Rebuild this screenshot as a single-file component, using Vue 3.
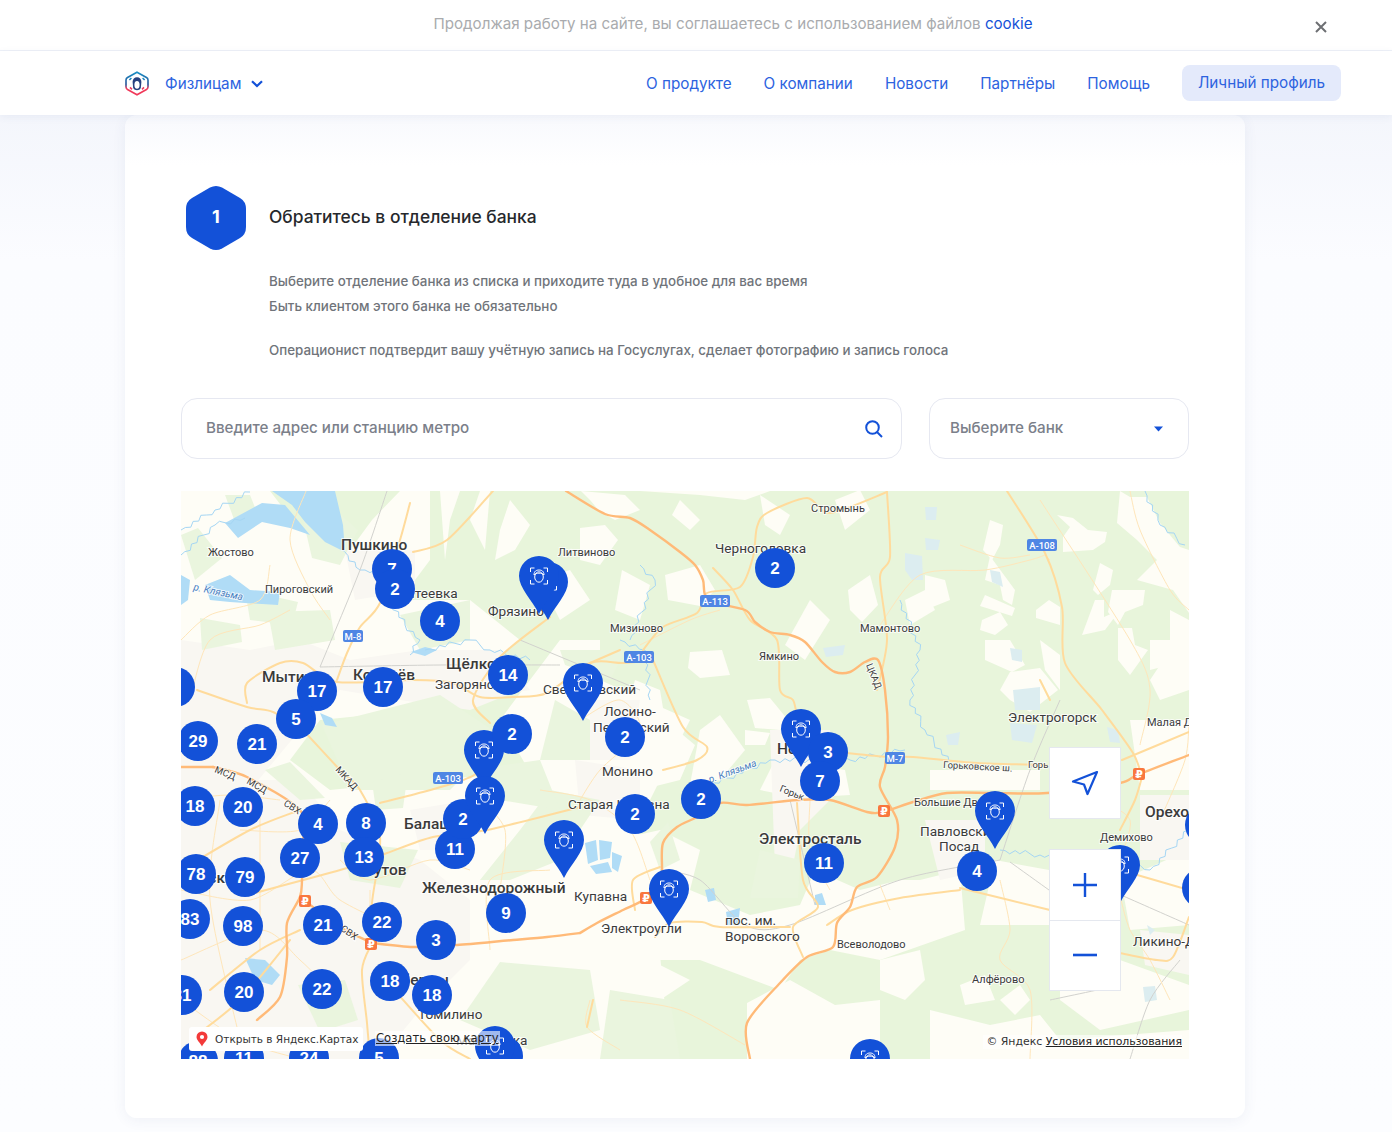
<script setup>
const toPts = (s) => {
  const n = s.trim().split(/[\s,]+/).map(Number)
  const out = []
  for (let i = 0; i < n.length; i += 2) out.push([n[i], n[i + 1]])
  return out
}
const smooth = (s) => {
  const p = toPts(s)
  let d = `M${p[0][0]} ${p[0][1]}`
  for (let i = 0; i < p.length - 1; i++) {
    const a = p[i - 1] || p[i]
    const b = p[i]
    const c = p[i + 1]
    const e = p[i + 2] || c
    const c1x = b[0] + (c[0] - a[0]) / 7
    const c1y = b[1] + (c[1] - a[1]) / 7
    const c2x = c[0] - (e[0] - b[0]) / 7
    const c2y = c[1] - (e[1] - b[1]) / 7
    d += `C${c1x.toFixed(1)} ${c1y.toFixed(1)} ${c2x.toFixed(1)} ${c2y.toFixed(1)} ${c[0]} ${c[1]}`
  }
  return d
}
const wiggle = (s) => {
  const p = toPts(s)
  let d = `M${p[0][0]} ${p[0][1]}`
  let k = 0
  for (let i = 0; i < p.length - 1; i++) {
    const dx = p[i + 1][0] - p[i][0]
    const dy = p[i + 1][1] - p[i][1]
    const len = Math.hypot(dx, dy)
    const n = Math.max(2, Math.round(len / 5))
    for (let j = 1; j <= n; j++) {
      k++
      const o = j === n ? 0 : ((k * 7) % 5 - 2) * 1.3
      const x = p[i][0] + (dx * j) / n - (dy / len) * o
      const y = p[i][1] + (dy * j) / n + (dx / len) * o
      d += `L${x.toFixed(1)} ${y.toFixed(1)}`
    }
  }
  return d
}
const cream = [
  "1057,515 1073,518 1088,530 1107,532 1105,542 1093,550 1063,552 1063,537 1070,527",
  "1120,491 1130,497 1147,497 1160,523 1180,547 1189,550 1189,613 1173,590 1137,580 1157,560 1137,540 1117,523",
  "1100,563 1113,570 1110,585 1098,595 1093,590",
  "1112,590 1145,590 1143,605 1125,612 1118,625 1108,612",
  "1095,600 1104,600 1104,617 1120,610 1105,630 1082,635",
  "1118,628 1132,628 1135,645 1148,650 1130,675 1118,660",
  "1049,600 1060,607 1060,625 1036,618 1036,610",
  "990,520 1003,525 1000,545 992,560 983,550",
  "990,556 1015,590 1012,605 1003,600 1000,585 985,580",
  "985,595 1015,608 1012,616 980,606",
  "982,620 1000,612 1008,625 995,635 980,630",
  "985,640 1010,640 1025,665 1012,672 985,660",
  "1010,672 1040,668 1058,690 1030,712 1010,700 1000,690",
  "1170,610 1189,620 1189,690 1160,700 1150,680 1170,650",
  "1040,640 1060,655 1060,690 1045,670",
  "581,491 625,495 640,510 615,520 600,512 590,500",
  "640,491 700,495 745,500 770,491",
  "580,528 605,525 618,540 600,565 580,560",
  "665,575 700,565 715,590 700,606 668,600",
  "622,570 650,585 640,620 615,610",
  "680,500 700,520 690,530 672,515",
  "760,495 790,515 780,535 765,525",
  "835,500 860,490 870,510 845,530",
  "905,600 925,590 935,610 910,625",
  "925,575 945,580 950,600 925,610",
  "848,590 870,575 878,605 862,622 850,610",
  "747,700 770,698 788,720 780,730 755,728",
  "745,730 770,733 765,745 745,745",
  "690,652 722,650 730,675 700,678 688,668",
  "635,680 660,690 665,720 695,745 680,780 640,790 612,775 625,720",
  "700,730 720,715 745,750 720,780 690,785",
  "775,760 845,770 850,795 800,798 760,790",
  "810,600 830,620 805,660 785,645",
  "930,770 1040,770 1040,790 930,790",
  "615,840 660,830 700,850 690,890 750,915 800,905 815,870 860,890 900,880 920,880 960,870 965,930 880,960 830,950 800,960 780,990 700,960 640,960 600,960",
  "747,1003 790,980 835,1005 880,1000 880,1059 747,1059",
  "581,945 640,955 690,980 660,1000 600,990 581,985",
  "930,1010 990,1025 1040,1015 1060,1040 1189,1030 1189,1059 930,1059",
  "1060,960 1120,960 1189,985 1189,1010 1100,1030 1060,1000",
  "880,960 920,950 925,980 905,1000 880,990",
  "1000,1000 1020,985 1030,1000 1015,1015",
  "960,985 985,975 995,1000 965,1005",
  "1121,880 1189,850 1189,925 1130,930",
  "995,860 1049,870 1049,925 980,925",
  "181,491 270,491 300,530 350,550 372,520 400,491 430,491 430,560 400,600 470,600 520,640 470,680 420,710 320,720 290,760 330,790 430,780 560,770 620,800 650,850 670,1059 181,1059",
  "440,491 460,491 450,520 445,560",
  "510,500 530,525 515,550 495,560 500,530",
  "470,520 480,491 490,491 485,550",
  "560,640 600,640 600,680 690,720 650,800 540,790 500,720",
  "540,580 570,570 590,600 560,620",
  "1130,720 1189,720 1189,790 1140,790",
  "1150,640 1189,640 1189,660 1150,670"
]
const urban = [
  "181,640 250,650 300,640 350,660 420,650 470,660 520,690 470,710 400,700 340,690 300,730 250,790 181,780",
  "181,780 300,780 340,830 420,860 470,900 470,960 420,1010 380,1059 181,1059",
  "345,550 415,550 415,590 355,600",
  "430,650 500,650 530,690 470,700",
  "590,700 640,700 630,760 590,760",
  "575,760 640,770 640,820 580,815",
  "770,730 830,730 840,790 800,830 790,880 775,870",
  "925,820 985,820 985,870 940,880",
  "1140,795 1189,795 1189,860 1140,860",
  "410,810 470,800 470,850 420,850",
  "1140,930 1189,935 1189,975 1145,965"
]
const green = [
  "225,495 250,495 258,515 235,522",
  "181,535 198,528 222,558 195,580",
  "268,612 330,610 335,640 275,650",
  "302,515 330,505 358,530 340,565 312,558",
  "245,590 298,602 292,625 250,620",
  "200,618 240,625 242,642 202,650",
  "400,615 470,600 470,640 420,650",
  "560,650 625,650 610,680 565,665",
  "322,725 440,695 500,735 470,770 450,790 350,790",
  "265,770 290,762 325,798 300,800",
  "340,842 418,850 400,888 350,880",
  "372,782 408,772 403,808 376,810",
  "298,985 345,980 358,1020 320,1032",
  "480,880 520,830 550,790 600,800 560,860 510,880",
  "650,842 668,822 680,860 660,870",
  "500,962 590,970 600,1030 530,1050 460,1020",
  "610,990 670,1000 680,1059 600,1059",
  "760,850 800,860 798,898 750,898",
  "555,700 590,720 590,760 540,760",
  "470,770 540,760 560,810 500,800"
]
const water = [
  "272,491 335,491 343,525 345,552 325,542 305,522 292,505",
  "225,523 262,503 285,505 310,535 290,528 262,522 238,538",
  "181,575 190,580 188,600 181,605",
  "205,585 230,575 250,590 280,592 278,605 230,602 210,600",
  "585,843 596,840 598,860 588,864",
  "599,840 612,842 610,858 600,860",
  "590,866 608,862 612,872 596,874",
  "612,852 622,856 618,872 612,868",
  "245,958 265,960 280,975 272,985 255,980",
  "320,713 332,718 337,727 325,725",
  "411,652 425,647 437,650 425,656",
  "815,895 822,893 826,905 815,905",
  "705,890 714,888 716,900 708,902",
  "726,912 740,908 738,925 728,925",
  "1120,870 1132,868 1128,880"
]
const pale = [
  "905,553 922,556 923,580 912,580 905,570",
  "925,538 940,540 938,550 926,550",
  "925,507 937,507 936,520 926,520",
  "823,648 845,645 843,655 826,657",
  "990,570 1000,572 1003,587 992,582",
  "1010,648 1022,650 1022,662 1012,660",
  "1013,690 1040,687 1040,710 1015,710",
  "1010,723 1037,725 1032,743 1012,740",
  "1107,727 1118,730 1120,743 1110,742",
  "1143,987 1155,986 1157,1000 1145,1002",
  "946,735 960,732 958,745 948,745",
  "1147,925 1155,930 1150,935"
]
const rivers = [
  "181 530 215 510 250 492",
  "181 555 215 525 245 518",
  "345 552 360 570 375 570 390 600 405 625 420 640 410 655",
  "425 650 470 640 490 650 530 660",
  "620 640 645 650 650 700",
  "1145 491 1160 525 1185 545",
  "900 600 920 650 910 700 925 730 955 770",
  "700 790 770 760 850 760 905 750",
  "1000 850 1040 855 1065 860",
  "1125 862 1150 870 1189 830",
  "640 565 655 580 630 640"
].map(wiggle)
const roadsMinor = [
  "181 640 210 615 260 600 270 565",
  "190 700 210 640 260 625 290 610",
  "306 491 290 540 310 590 330 620",
  "640 645 690 620 720 610",
  "1040 500 1130 640 1150 690 1140 745",
  "880 625 920 575 985 570 1030 560 1045 555",
  "960 545 1000 558 1030 555",
  "1130 491 1140 530 1170 590 1189 610",
  "580 720 620 700 640 730 600 770 580 800",
  "810 800 810 850 830 890",
  "880 885 890 910",
  "1100 800 1130 820 1120 860",
  "1121 900 1130 930 1150 960 1170 1000",
  "1000 880 1010 930 1000 960 1030 990 1030 1059",
  "1050 560 1045 555",
  "1160 820 1185 760 1189 720",
  "550 870 490 880 490 950",
  "240 830 300 830 330 800",
  "181 890 250 900 310 870 340 900 400 930",
  "181 960 260 930 300 960 340 1000",
  "220 800 210 900 240 1040",
  "260 800 260 950",
  "370 890 370 940",
  "340 860 370 880 430 860 470 870",
  "500 890 505 830 480 800",
  "540 790 590 800 630 830 650 880",
  "180 800 230 795 280 800",
  "181 1000 240 1040 300 1059",
  "620 1000 680 1010 745 1045",
  "590 1000 587 1027 620 1050"
]
const roadsMain = [
  "410 503 400 540 380 603 360 627 347 653 337 680",
  "493 491 447 540 413 552",
  "550 617 500 657 473 700 490 723",
  "197 690 247 707 273 712 303 730",
  "247 703 247 683 280 663 303 663 337 682 413 680 453 683 480 697 513 697 547 693 590 663 623 663 653 660",
  "303 730 340 770 360 790 380 837 372 903 372 943",
  "380 803 423 792 463 780 480 770 497 740",
  "247 895 347 868 387 853 433 837 487 830 580 807",
  "372 943 362 970 367 1023 370 1059",
  "390 985 440 1040 470 1059",
  "190 1040 240 1000 290 940",
  "181 870 250 830 300 810",
  "210 990 260 950 300 930",
  "1007 491 1045 553 1062 607 1065 663 1102 710 1133 753 1142 777",
  "1122 760 1189 732",
  "960 888 1050 910",
  "1120 953 1157 960 1173 957 1189 917",
  "797 803 803 880 818 907 793 927 803 957",
  "790 927 720 927 702 922 670 923 655 937",
  "635 910 633 880 660 867",
  "827 925 852 910 900 898 960 890",
  "887 492 830 513 807 498 767 513 757 527 753 557 740 587 707 593 697 613 663 627 643 650",
  "713 568 733 590 750 620 777 640 780 690 793 700 797 717",
  "653 660 683 727 707 747 697 760 663 770",
  "887 492 890 557 880 577 887 640 877 690",
  "847 753 887 757 913 757 977 763 1047 765",
  "593 1000 587 1027",
  "1040 680 1050 700",
  "1120 830 1135 800 1142 777",
  "1120 870 1189 890",
  "620 650 590 663"
]
const roadsMajor = [
  "566 491 605 514 630 518 650 530 680 552 695 565 703 580 708 600 745 610 755 622 770 632 790 635 805 642 822 662 835 672 850 672 865 662 878 660 885 690 888 737 885 767 880 787 897 820 895 847 877 877 857 887 850 907 837 923 833 947 807 957 780 983 747 1023 750 1059",
  "580 933 597 923 623 910 643 900 662 880 662 867 663 843 677 827 697 817 720 803 747 805 797 800 830 800 867 812 883 812 913 802 947 793 993 793 1047 793 1120 783 1137 775 1189 755",
  "372 943 413 947 457 945 513 940 547 937 580 933",
  "213 767 247 777 300 810 303 843 302 880 300 897 287 923 287 957 280 997 257 1020",
  "300 897 340 927 372 943",
  "181 767 213 767"
]
const roads = {
  minor: roadsMinor.map(smooth),
  main: roadsMain.map(smooth),
  major: roadsMajor.map(smooth)
}
const rails = [
  "387 491 360 570 320 667",
  "320 667 440 665 560 665",
  "520 640 640 690",
  "660 870 700 880 745 925 790 925 900 880 1000 860",
  "1010 862 1049 890",
  "1121 895 1189 925",
  "815 905 790 800",
  "1060 700 1030 770 1000 860",
  "1050 1000 1121 985",
  "1130 1059 1150 1000 1180 960"
]
const railPaths = rails.map(smooth)
const labels = [
  { t: "Жостово", x: 208, y: 556, c: "s" },
  { t: "Пироговский", x: 265, y: 593, c: "s" },
  { t: "Пушкино", x: 341, y: 550, c: "b" },
  { t: "Ивантеевка", x: 382, y: 598, c: "m" },
  { t: "Фрязино", x: 488, y: 616, c: "m" },
  { t: "Литвиново", x: 558, y: 556, c: "s" },
  { t: "Стромынь", x: 811, y: 512, c: "s" },
  { t: "Черноголовка", x: 715, y: 553, c: "m" },
  { t: "Мизиново", x: 610, y: 632, c: "s" },
  { t: "Мамонтово", x: 860, y: 632, c: "s" },
  { t: "Ямкино", x: 759, y: 660, c: "s" },
  { t: "Щёлково", x: 446, y: 669, c: "b" },
  { t: "Загорянский", x: 435, y: 689, c: "m" },
  { t: "Свердловский", x: 543, y: 694, c: "m" },
  { t: "Лосино-", x: 604, y: 716, c: "m" },
  { t: "Петровский", x: 593, y: 732, c: "m" },
  { t: "Мытищи", x: 262, y: 682, c: "b" },
  { t: "Королёв", x: 353, y: 680, c: "b" },
  { t: "Монино", x: 602, y: 776, c: "m" },
  { t: "Ногинск", x: 777, y: 754, c: "b" },
  { t: "Электрогорск", x: 1008, y: 722, c: "m" },
  { t: "Малая Дубна", x: 1147, y: 726, c: "s" },
  { t: "Старая Купавна", x: 568, y: 809, c: "m" },
  { t: "Большие Дворы", x: 914, y: 806, c: "s" },
  { t: "Павловский", x: 920, y: 836, c: "m" },
  { t: "Посад", x: 939, y: 851, c: "m" },
  { t: "Орехово", x: 1145, y: 817, c: "b" },
  { t: "Демихово", x: 1100, y: 841, c: "s" },
  { t: "Электросталь", x: 759, y: 844, c: "b" },
  { t: "Балашиха", x: 404, y: 829, c: "b" },
  { t: "Реутов", x: 356, y: 875, c: "b" },
  { t: "Москва", x: 186, y: 883, c: "b" },
  { t: "Железнодорожный", x: 422, y: 893, c: "b" },
  { t: "Купавна", x: 574, y: 901, c: "m" },
  { t: "Электроугли", x: 601, y: 933, c: "m" },
  { t: "пос. им.", x: 725, y: 925, c: "m" },
  { t: "Воровского", x: 725, y: 941, c: "m" },
  { t: "Всеволодово", x: 837, y: 948, c: "s" },
  { t: "Алфёрово", x: 972, y: 983, c: "s" },
  { t: "Ликино-Дулёво", x: 1133, y: 946, c: "m" },
  { t: "Люберцы", x: 378, y: 985, c: "b" },
  { t: "Томилино", x: 418, y: 1019, c: "m" },
  { t: "Малаховка", x: 456, y: 1045, c: "m" },
  { t: "Долгопрудный", x: 72, y: 650, c: "b" }
]
const tilted = [
  { t: "р. Клязьма", x: 193, y: 590, r: 12, c: "river" },
  { t: "р. Клязьма", x: 710, y: 783, r: -20, c: "river" },
  { t: "МСД", x: 214, y: 772, r: 22, c: "tiny" },
  { t: "МСД", x: 246, y: 783, r: 30, c: "tiny" },
  { t: "СВХ", x: 283, y: 805, r: 32, c: "tiny" },
  { t: "МКАД", x: 335, y: 770, r: 48, c: "tiny" },
  { t: "СВХ", x: 340, y: 930, r: 35, c: "tiny" },
  { t: "ЦКАД", x: 866, y: 665, r: 68, c: "tiny" },
  { t: "Горьковское ш.", x: 943, y: 768, r: 3, c: "tiny" },
  { t: "Горь", x: 1028, y: 768, r: 0, c: "tiny" },
  { t: "Горьк", x: 779, y: 791, r: 22, c: "tiny" }
]
const shields = [
  { t: "М-8", x: 353, y: 636, w: 20 },
  { t: "А-103", x: 448, y: 778, w: 30 },
  { t: "А-113", x: 715, y: 601, w: 30 },
  { t: "А-103", x: 639, y: 657, w: 30 },
  { t: "А-108", x: 1042, y: 545, w: 30 },
  { t: "М-7", x: 895, y: 758, w: 20 }
]
const rubles = [
  [305, 901],
  [371, 944],
  [646, 898],
  [884, 811],
  [1139, 774]
]
const pins = [
  [548, 582],
  [539, 576],
  [583, 683],
  [484, 750],
  [564, 840],
  [669, 889],
  [801, 729],
  [995, 811],
  [1120, 865],
  [870, 1059],
  [503, 1056],
  [495, 1046]
]
const clusters = [
  [392, 569, "7"], [395, 589, "2"], [440, 621, "4"], [317, 691, "17"], [383, 687, "17"],
  [296, 719, "5"], [508, 675, "14"], [257, 744, "21"], [198, 741, "29"], [175, 687, ""],
  [195, 806, "18"], [243, 807, "20"], [318, 824, "4"], [366, 823, "8"], [455, 849, "11"],
  [463, 819, "2"], [300, 858, "27"], [364, 857, "13"], [196, 874, "78"], [245, 877, "79"],
  [190, 919, "83"], [243, 926, "98"], [323, 925, "21"], [382, 922, "22"], [436, 940, "3"],
  [506, 913, "9"], [390, 981, "18"], [432, 995, "18"], [322, 989, "22"], [244, 992, "20"],
  [182, 995, "81"], [198, 1061, "88"], [244, 1058, "11"], [309, 1058, "24"], [379, 1058, "5"],
  [775, 568, "2"], [625, 737, "2"], [635, 814, "2"], [701, 799, "2"], [828, 752, "3"],
  [820, 781, "7"], [824, 863, "11"], [977, 871, "4"], [1205, 825, ""], [1202, 888, ""]
]
const pinsTop = [[485, 796]]
const clusterTop = [[512, 734, "2"]]
</script>

<template>
  <div class="page">
    <div class="cookie">
      <p class="cookie-text">Продолжая работу на сайте, вы соглашаетесь с использованием файлов <a class="cookie-link">cookie</a></p>
      <svg class="cookie-close" width="12" height="12" viewBox="0 0 12 12"><path d="M1 1 11 11M11 1 1 11" stroke="#6d6f73" stroke-width="2" fill="none" /></svg>
    </div>
    <header class="header">
      <svg class="logo" width="24" height="25" viewBox="0 0 24 25">
        <defs>
          <linearGradient id="lg" x1="0" y1="0" x2="0" y2="1">
            <stop offset="0" stop-color="#1a8fc4" />
            <stop offset=".55" stop-color="#274f96" />
            <stop offset=".72" stop-color="#f0395a" />
            <stop offset="1" stop-color="#f0395a" />
          </linearGradient>
        </defs>
        <path d="M12 1.200 21.500 6.500Q23 7.400 23 9V16Q23 17.600 21.500 18.500L12 23.800 2.500 18.500Q1 17.600 1 16V9Q1 7.400 2.500 6.500Z" fill="none" stroke="url(#lg)" stroke-width="1.600" />
        <path d="M7.600 11C7.600 7.800 9.500 6.200 12 6.200S16.400 7.800 16.400 11L15.800 17C15 18.500 13.500 19.200 12 19.200S9 18.500 8.200 17Z" fill="#27417f" />
        <ellipse cx="12" cy="13.800" rx="2.600" ry="3.900" fill="#fff" />
        <path d="M4.400 9 6.400 7M19.600 9 17.600 7M5 16.400 7 18.400M19 16.400 17 18.400" stroke="url(#lg)" stroke-width="1.500" fill="none" />
      </svg>
      <a class="segment">Физлицам</a>
      <svg class="chevron" width="12" height="8" viewBox="0 0 12 8"><path d="M1 1.200 6 6 11 1.200" stroke="#1351d8" stroke-width="2.200" fill="none" /></svg>
      <nav class="nav">
        <a class="nav-link">О продукте</a>
        <a class="nav-link">О компании</a>
        <a class="nav-link">Новости</a>
        <a class="nav-link">Партнёры</a>
        <a class="nav-link">Помощь</a>
        <a class="profile">Личный профиль</a>
      </nav>
    </header>
    <main class="card">
      <div class="step">
        <svg class="hex" width="60" height="64" viewBox="0 0 60 64">
          <path d="M24 1.500Q30 -1.500 36 1.500L54 12Q60 15.500 60 23V41Q60 48.500 54 52L36 62.500Q30 65.500 24 62.500L6 52Q0 48.500 0 41V23Q0 15.500 6 12Z" fill="#1351d8" />
          <text class="hex-num" x="30" y="37" text-anchor="middle">1</text>
        </svg>
        <h2 class="step-title">Обратитесь в отделение банка</h2>
      </div>
      <div class="copy">
        <p class="copy-line">Выберите отделение банка из списка и приходите туда в удобное для вас время</p>
        <p class="copy-line">Быть клиентом этого банка не обязательно</p>
        <p class="copy-line copy-gap">Операционист подтвердит вашу учётную запись на Госуслугах, сделает фотографию и запись голоса</p>
      </div>
      <div class="filters">
        <div class="field field-search">
          <span class="placeholder">Введите адрес или станцию метро</span>
          <svg width="20" height="20" viewBox="0 0 20 20"><circle cx="8.500" cy="8.500" r="6.300" fill="none" stroke="#1351d8" stroke-width="2" /><path d="M13 13 18 18" stroke="#1351d8" stroke-width="2" /></svg>
        </div>
        <div class="field field-bank">
          <span class="placeholder">Выберите банк</span>
          <svg width="9" height="6" viewBox="0 0 9 6"><path d="M0 .5H9L4.500 5.500Z" fill="#1351d8" /></svg>
        </div>
      </div>
      <div class="map">
        <svg class="map-art" width="1008" height="568" viewBox="181 491 1008 568">
          <rect x="181" y="491" width="1008" height="568" fill="#e8f5db" />
          <polygon v-for="(p, i) in cream" :key="'c' + i" :points="p" fill="#fefdf6" />
          <polygon v-for="(p, i) in urban" :key="'u' + i" :points="p" fill="#f9f7f2" />
          <polygon v-for="(p, i) in green" :key="'g' + i" :points="p" fill="#eaf5de" />
          <polygon v-for="(p, i) in pale" :key="'e' + i" :points="p" fill="#dcedf0" />
          <polygon v-for="(p, i) in water" :key="'w' + i" :points="p" fill="#b0dcf6" />
          <path v-for="(d, i) in rivers" :key="'r' + i" :d="d" class="river-line" />
          <path v-for="(d, i) in railPaths" :key="'f' + i" :d="d" class="rail" />
          <path v-for="(d, i) in roads.minor" :key="'m' + i" :d="d" class="road-minor" />
          <path v-for="(d, i) in roads.main" :key="'a' + i" :d="d" class="road-main" />
          <path v-for="(d, i) in roads.major" :key="'j' + i" :d="d" class="road-major" />
          <text v-for="(l, i) in labels" :key="'l' + i" :x="l.x" :y="l.y" :class="'label label-' + l.c">{{ l.t }}</text>
          <text v-for="(l, i) in tilted" :key="'t' + i" :x="l.x" :y="l.y" :transform="`rotate(${l.r} ${l.x} ${l.y})`" :class="'label label-' + l.c">{{ l.t }}</text>
          <g v-for="(s, i) in shields" :key="'s' + i">
            <rect :x="s.x - s.w / 2" :y="s.y - 6" :width="s.w" height="12" rx="2" fill="#4f86e4" />
            <text :x="s.x" :y="s.y + 3.500" class="shield">{{ s.t }}</text>
          </g>
          <g v-for="(r, i) in rubles" :key="'b' + i">
            <rect :x="r[0] - 6" :y="r[1] - 6" width="12" height="12" rx="2" fill="#f9773e" />
            <text :x="r[0]" :y="r[1] + 4" class="ruble">₽</text>
          </g>
          <g v-for="(p, i) in pins" :key="'p' + i" :transform="`translate(${p[0]} ${p[1]})`">
            <use href="#pin" />
          </g>
          <g v-for="(c, i) in clusters" :key="'k' + i">
            <circle :cx="c[0]" :cy="c[1]" r="20" fill="#1351d8" />
            <text :x="c[0]" :y="c[1] + 5.500" class="count">{{ c[2] }}</text>
          </g>
          <g v-for="(p, i) in pinsTop" :key="'q' + i" :transform="`translate(${p[0]} ${p[1]})`">
            <use href="#pin" />
          </g>
          <g v-for="(c, i) in clusterTop" :key="'z' + i">
            <circle :cx="c[0]" :cy="c[1]" r="20" fill="#1351d8" />
            <text :x="c[0]" :y="c[1] + 5.500" class="count">{{ c[2] }}</text>
          </g>
          <defs>
            <g id="pin">
              <path d="M0 38C-7 24 -20 12 -20 0A20 20 0 0 1 20 0C20 12 7 24 0 38Z" fill="#1351d8" />
              <path d="M-8.500 -4V-8H-4.500M4.500 -8H8.500V-4M8.500 4V8H4.500M-4.500 8H-8.500V4" fill="none" stroke="#fff" stroke-width="1" />
              <ellipse cx="0" cy="1" rx="4.300" ry="5.200" fill="none" stroke="#fff" stroke-width="1" />
              <path d="M-5 -1C-5 -5 -2.500 -6 0 -6S5 -5 5 -1C3 -3.500 -3 -3.500 -5 -1Z" fill="none" stroke="#fff" stroke-width="1" />
            </g>
          </defs>
        </svg>
        <div class="yandex-open">
          <svg width="12" height="16" viewBox="0 0 12 16"><path d="M6 .5A5.500 5.500 0 0 1 11.500 6C11.500 9 8 11.500 6 15.500 4 11.500 .5 9 .5 6A5.500 5.500 0 0 1 6 .5Z" fill="#f33a3a" /><circle cx="6" cy="6" r="2.100" fill="#fff" /></svg>
          <span>Открыть в Яндекс.Картах</span>
        </div>
        <a class="yandex-create">Создать свою карту</a>
        <div class="yandex-terms">© Яндекс <a class="yandex-underline">Условия использования</a></div>
        <div class="control control-nav">
          <svg width="28" height="26" viewBox="0 0 28 26"><path d="M26 2 2 11.500 13 14.500 16.500 24Z" fill="none" stroke="#1351d8" stroke-width="2.200" stroke-linejoin="round" /></svg>
        </div>
        <div class="control control-zoom">
          <button class="zoom-btn">
            <svg width="26" height="26" viewBox="0 0 26 26"><path d="M13 1V25M1 13H25" stroke="#1351d8" stroke-width="2.400" /></svg>
          </button>
          <button class="zoom-btn zoom-minus">
            <svg width="26" height="4" viewBox="0 0 26 4"><path d="M1 2H25" stroke="#1351d8" stroke-width="2.600" /></svg>
          </button>
        </div>
      </div>
    </main>
  </div>
</template>

<style>
html, body { margin: 0; background: #fff; }
</style>

<style scoped>
.page {
  width: 1392px;
  height: 1132px;
  overflow: hidden;
  font-family: Inter, "Noto Sans", sans-serif;
  background: linear-gradient(#f4f6fc 115px, #fbfcff 260px, #fcfdff);
  position: relative;
}
p, h2 { margin: 0; }
.cookie {
  height: 50px;
  background: #fff;
  border-bottom: 1px solid #eef1f8;
  display: flex;
  justify-content: center;
  position: relative;
}
.cookie-text {
  margin: 14px 0 0 74px;
  font-size: 15.150px;
  line-height: 20px;
  color: #a9abae;
}
.cookie-link { color: #1351d8; }
.cookie-close { position: absolute; left: 1315px; top: 21px; }
.header {
  height: 64px;
  background: #fff;
  display: flex;
  align-items: center;
  padding: 0 51px 0 125px;
  box-shadow: 0 2px 8px rgba(60, 80, 140, 0.07);
  position: relative;
  z-index: 2;
}
.segment {
  margin-left: 16px;
  font-size: 15.250px;
  color: #2d63df;
}
.chevron { margin: 2px 0 0 10px; }
.nav { margin-left: auto; display: flex; align-items: center; gap: 32px; }
.nav-link { font-size: 15.250px; color: #2d63df; }
.profile {
  height: 36px;
  padding: 0 16px;
  border-radius: 8px;
  background: #e4eafb;
  font-size: 15.250px;
  line-height: 36px;
  color: #2d63df;
}
.card {
  width: 1120px;
  height: 1003px;
  margin-left: 125px;
  box-sizing: border-box;
  padding: 71px 56px 0;
  border-radius: 12px;
  background: linear-gradient(#f8f9fd, #fff 50px);
  box-shadow: 0 2px 14px rgba(50, 70, 130, 0.07);
}
.step { display: flex; align-items: center; margin-left: 5px; gap: 23px; }
.hex { display: block; flex: none; }
.hex-num { font-size: 18px; font-weight: 700; fill: #fff; }
.step-title { margin-top: -2px; font-size: 17.400px; font-weight: 500; line-height: 22px; color: #26282c; }
.copy { margin: 19px 0 0 88px; }
.copy-line { font-size: 13.380px; font-weight: 500; line-height: 25px; color: #70747a; }
.copy-gap { margin-top: 19px; }
.filters { display: flex; gap: 27px; margin-top: 35px; }
.field {
  height: 61px;
  box-sizing: border-box;
  padding-bottom: 3px;
  border: 1px solid #e6e8f1;
  border-radius: 16px;
  background: #fff;
  display: flex;
  align-items: center;
  justify-content: space-between;
}
.field-search { width: 721px; padding-left: 24px; padding-right: 17px; }
.field-bank { width: 260px; padding-left: 20px; padding-right: 25px; }
.field svg { margin-top: 3px; }
.placeholder { font-size: 15.200px; font-weight: 500; color: #7b808a; }
.map {
  position: relative;
  width: 1008px;
  height: 568px;
  margin-top: 32px;
  overflow: hidden;
  font-family: "Liberation Sans", sans-serif;
}
.map-art { display: block; }
.river-line { fill: none; stroke: #a5d6f4; stroke-width: 1; }
.rail { fill: none; stroke: #d2d2ce; stroke-width: 1; }
.road-minor { fill: none; stroke: #ffe6ba; stroke-width: 1; }
.road-main { fill: none; stroke: #ffdb9c; stroke-width: 2; stroke-linecap: round; }
.road-major { fill: none; stroke: #ffba78; stroke-width: 2.400; stroke-linecap: round; }
.label {
  font-family: Roboto, "Liberation Sans", sans-serif;
  fill: #3b3b3b;
  paint-order: stroke;
  stroke: rgba(255, 255, 255, 0.75);
  stroke-width: 2px;
}
.label-s { font-size: 11px; }
.label-m { font-size: 13.600px; }
.label-b { font-size: 15.500px; font-weight: 500; fill: #3a3a3a; }
.label-tiny { font-size: 9.500px; }
.label-river { font-size: 10px; font-style: italic; fill: #4a7fc0; }
.shield { font-size: 9.500px; font-weight: 500; font-family: Roboto, sans-serif; fill: #fff; text-anchor: middle; }
.ruble { font-size: 11px; font-weight: 700; font-family: "DejaVu Sans", sans-serif; fill: #fff; text-anchor: middle; }
.count { font-size: 17px; font-weight: 700; font-family: "Liberation Sans", sans-serif; fill: #fff; text-anchor: middle; }
.yandex-open {
  position: absolute;
  left: 8px;
  top: 536px;
  width: 174px;
  height: 24px;
  box-sizing: border-box;
  padding-left: 7px;
  border-radius: 3px;
  background: #fff;
  display: flex;
  align-items: center;
  gap: 7px;
  font-family: "DejaVu Sans", sans-serif;
  font-size: 10.500px;
  color: #333;
}
.yandex-create {
  position: absolute;
  left: 194px;
  top: 540px;
  padding: 0 1px;
  background: rgba(255, 255, 255, 0.6);
  font-family: "DejaVu Sans", sans-serif;
  font-size: 11.600px;
  line-height: 15px;
  color: #222;
  text-decoration: underline;
}
.yandex-terms {
  position: absolute;
  right: 7px;
  top: 544px;
  padding-left: 3px;
  background: rgba(255, 255, 255, 0.6);
  font-family: "DejaVu Sans", sans-serif;
  font-size: 10.900px;
  line-height: 14px;
  color: #333;
}
.yandex-underline { text-decoration: underline; color: #222; }
.control {
  position: absolute;
  left: 868px;
  width: 72px;
  box-sizing: border-box;
  border: 1px solid #e5e8ef;
  background: #fff;
  display: flex;
}
.control-nav { top: 256px; height: 72px; align-items: center; justify-content: center; }
.control-zoom { top: 358px; height: 142px; flex-direction: column; }
.zoom-btn {
  flex: 1;
  padding: 0;
  border: 0;
  background: none;
  display: flex;
  align-items: center;
  justify-content: center;
}
.zoom-minus { border-top: 1px solid #e5e8ef; }
</style>
